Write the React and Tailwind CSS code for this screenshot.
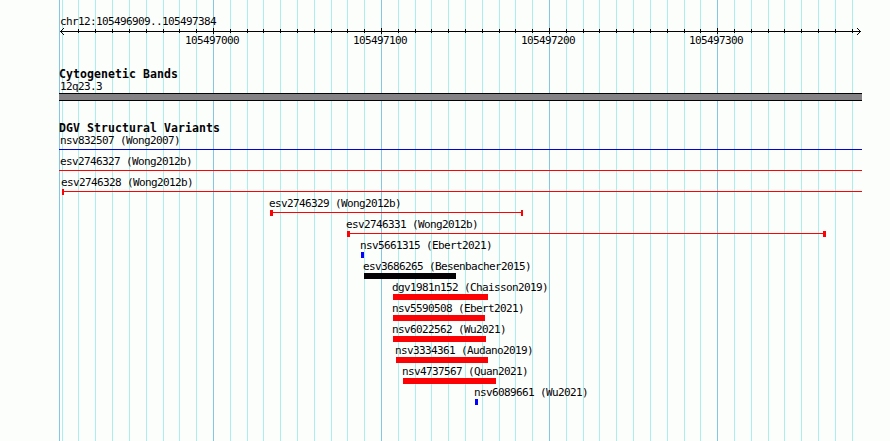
import React from 'react';

const LEFT = 59;
const RIGHT = 862;

const MAJOR = [213, 381, 549, 717];
const MINOR = [
    62, 78, 95, 112, 129, 146, 163, 179, 196, 230, 247, 263, 280, 297, 314, 331, 347, 364,
    398, 415, 431, 448, 465, 482, 499, 515, 532, 566, 583, 599, 616, 633, 650, 667, 684, 700,
    734, 751, 768, 784, 801, 818, 835, 852,
];

const RED = '#fc0204';
const BLUE = '#0402fc';
const BLACK = '#040204';

// line: thin bar, caps drawn only where the variant ends inside the view
const VARIANTS = [
    { name: 'nsv832507 (Wong2007)', text: 60, start: LEFT, end: RIGHT, color: '#0402dc', line: true },
    { name: 'esv2746327 (Wong2012b)', text: 60, start: LEFT, end: RIGHT, color: RED, line: true },
    { name: 'esv2746328 (Wong2012b)', text: 61, start: 62, end: RIGHT, color: RED, line: true, capStart: 2 },
    { name: 'esv2746329 (Wong2012b)', text: 269, start: 270, end: 523, color: RED, line: true, capStart: 3, capEnd: 2 },
    { name: 'esv2746331 (Wong2012b)', text: 346, start: 347, end: 826, color: RED, line: true, capStart: 3, capEnd: 3 },
    { name: 'nsv5661315 (Ebert2021)', text: 360, start: 361, end: 364, color: BLUE },
    { name: 'esv3686265 (Besenbacher2015)', text: 363, start: 364, end: 456, color: BLACK },
    { name: 'dgv1981n152 (Chaisson2019)', text: 392, start: 393, end: 488, color: RED },
    { name: 'nsv5590508 (Ebert2021)', text: 392, start: 393, end: 485, color: RED },
    { name: 'nsv6022562 (Wu2021)', text: 392, start: 393, end: 486, color: RED },
    { name: 'nsv3334361 (Audano2019)', text: 395, start: 396, end: 488, color: RED },
    { name: 'nsv4737567 (Quan2021)', text: 402, start: 403, end: 496, color: RED },
    { name: 'nsv6089661 (Wu2021)', text: 474, start: 475, end: 478, color: BLUE },
];

const Grid = () => (
    <svg className="absolute inset-0" width="890" height="441" shapeRendering="crispEdges">
        {MINOR.map((x) => (
            <rect key={x} x={x} y="0" width="1" height="441" fill="#aceeec" />
        ))}
        {[LEFT, ...MAJOR].map((x) => (
            <rect key={x} x={x} y="0" width="1" height="441" fill="#84c6e4" />
        ))}
    </svg>
);

const Ruler = () => (
    <svg className="block -mt-px" width="890" height="9" shapeRendering="crispEdges" fill={BLACK}>
        <rect x="60" y="4" width="801" height="1" />
        {MINOR.slice(1).map((x) => (
            <rect key={x} x={x} y="2" width="1" height="4" />
        ))}
        {MAJOR.map((x) => (
            <rect key={x} x={x} y="1" width="1" height="6" />
        ))}
        {[1, 2, 3].map((i) => (
            <g key={i}>
                <rect x={60 + i} y={4 - i} width="1" height="1" />
                <rect x={60 + i} y={4 + i} width="1" height="1" />
                <rect x={860 - i} y={4 - i} width="1" height="1" />
                <rect x={860 - i} y={4 + i} width="1" height="1" />
            </g>
        ))}
    </svg>
);

const Label = ({ children }) => (
    <div className="h-3 text-[11px] leading-[12px] tracking-[-0.622px]">{children}</div>
);

const TrackTitle = ({ children }) => (
    <div className="h-[13px] pl-[59px] text-[11.5px] leading-[12px] font-bold tracking-[0.077px]">{children}</div>
);

const Variant = ({ name, text, start, end, color, line, capStart, capEnd }) => (
    <div className="h-[21px]">
        <div style={{ paddingLeft: text }}>
            <Label>{name}</Label>
        </div>
        <svg className="block" width="890" height="6" shapeRendering="crispEdges" fill={color}>
            <rect x={start} y={line ? 2 : 0} width={end - start} height={line ? 1 : 6} />
            {capStart && <rect x={start} y="0" width={capStart} height="6" />}
            {capEnd && <rect x={end - capEnd} y="0" width={capEnd} height="6" />}
        </svg>
    </div>
);

const App = () => {
    return (
        <div className="relative w-[890px] h-[441px] overflow-hidden bg-[#fcfefc] text-[#040204] whitespace-pre font-['DejaVu_Sans_Mono',monospace]">
            <Grid />
            <div className="relative flex flex-col pt-4">
                {/* Coordinates */}
                <div className="pl-[60px]">
                    <Label>chr12:105496909..105497384</Label>
                </div>
                <Ruler />
                <div className="flex gap-[114px] pl-[185px] -mt-px">
                    {[105497000, 105497100, 105497200, 105497300].map((pos) => (
                        <div key={pos} className="w-[54px]">
                            <Label>{pos}</Label>
                        </div>
                    ))}
                </div>

                {/* Cytogenetic bands */}
                <div className="pt-[21px]">
                    <TrackTitle>Cytogenetic Bands</TrackTitle>
                    <div className="pl-[60px]">
                        <Label>12q23.3</Label>
                    </div>
                    <div className="ml-[59px] h-2 w-[803px] border-y border-[#040204] bg-[#848284]" />
                </div>

                {/* Structural variants */}
                <div className="pt-[21px]">
                    <TrackTitle>DGV Structural Variants</TrackTitle>
                    {VARIANTS.map((v) => (
                        <Variant key={v.name} {...v} />
                    ))}
                </div>
            </div>
        </div>
    );
};

export default App;
